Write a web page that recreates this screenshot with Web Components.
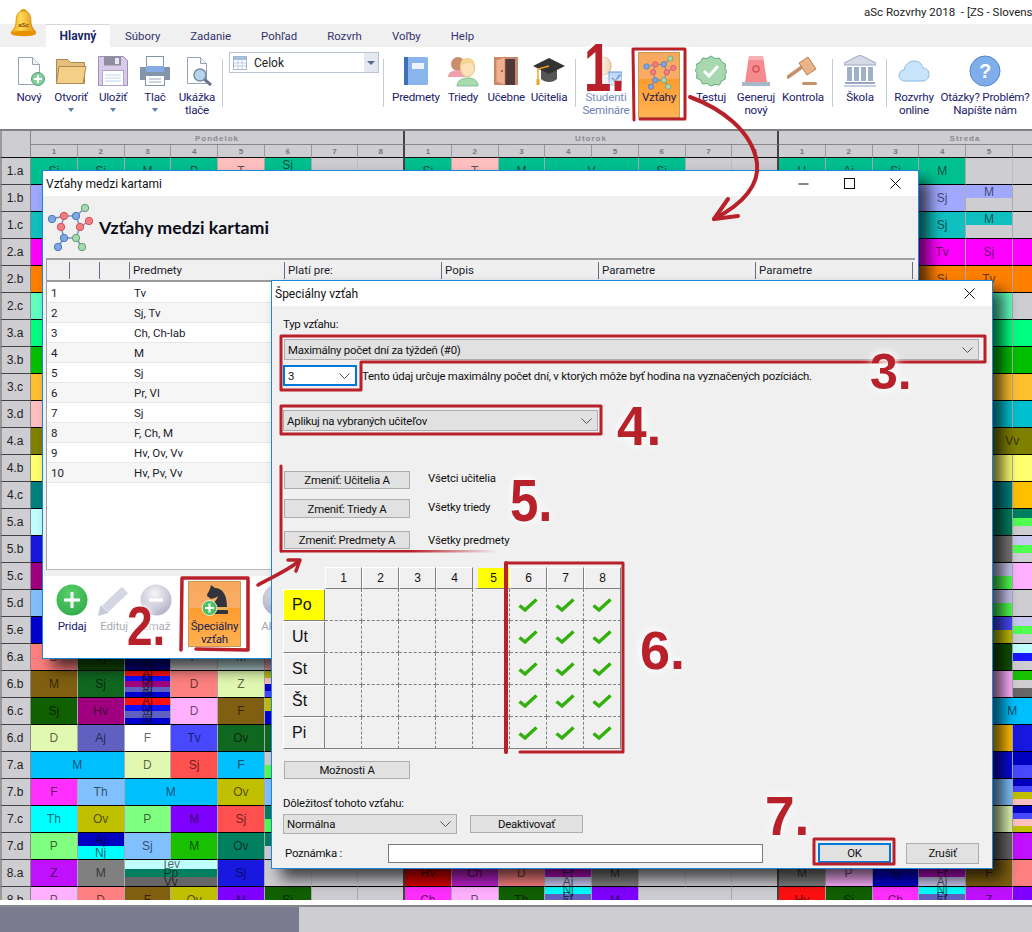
<!DOCTYPE html>
<html lang="sk">
<head>
<meta charset="utf-8">
<title>aSc Rozvrhy</title>
<style>
  html, body { margin: 0; padding: 0; }
  body { width: 1032px; height: 932px; overflow: hidden; position: relative; background: #fff; font: 12px Roboto, sans-serif; color: #000; }
  asc-ribbon svg, asc-window svg { display: block; }
</style>
</head>
<body>

<asc-titlebar>aSc Rozvrhy 2018&nbsp; - [ZS - Slovensko]</asc-titlebar>
<asc-tabs>
  <asc-tab active>Hlavný</asc-tab><asc-tab>Súbory</asc-tab><asc-tab>Zadanie</asc-tab><asc-tab>Pohľad</asc-tab><asc-tab>Rozvrh</asc-tab><asc-tab>Voľby</asc-tab><asc-tab>Help</asc-tab>
</asc-tabs>

<asc-ribbon>
  <rb-item w="42" drop="no"><svg slot="icon" width="32" height="32" viewBox="0 0 32 32"><path d="M5.5 2.5h14l7 7v20h-21z" fill="#fff" stroke="#95a3b8"/><path d="M19.5 2.5v7h7" fill="#eef1f6" stroke="#95a3b8"/><circle cx="25" cy="24" r="6.5" fill="#86cfa0" stroke="#4f9f70"/><path d="M25 20v8M21 24h8" stroke="#fff" stroke-width="2"/></svg>Nový</rb-item>
  <rb-item w="42" drop="yes"><svg slot="icon" width="32" height="32" viewBox="0 0 32 32"><path d="M1.5 4.5h11l3 3h14v21h-28z" fill="#e8bf78" stroke="#ab8b55"/><path d="M4 11.5h27l-3 17H1.5z" fill="#f5cf85" stroke="#ab8b55"/></svg>Otvoriť</rb-item>
  <rb-item w="42" drop="yes"><svg slot="icon" width="32" height="32" viewBox="0 0 32 32"><path d="M1.5 1.5h25l4 4v25h-29z" fill="#d9cbe8" stroke="#9f8fbc"/><rect x="7" y="1.5" width="17" height="9" fill="#8f8d9f"/><rect x="18" y="3" width="4" height="6" fill="#e8e8f0"/><rect x="5.5" y="15.5" width="21" height="15" fill="#fff" stroke="#b0a4c6"/><path d="M8 20h16M8 23h16M8 26h16" stroke="#bcd4ee"/></svg>Uložiť</rb-item>
  <rb-item w="42" drop="yes"><svg slot="icon" width="32" height="32" viewBox="0 0 32 32"><rect x="7.5" y="1.5" width="17" height="10" fill="#fff" stroke="#8494ab"/><path d="M1 12h30v13H1z" fill="#8494ab"/><rect x="7" y="11" width="18" height="6" fill="#85aae6"/><rect x="6.5" y="20.5" width="19" height="10" fill="#fff" stroke="#8494ab"/><path d="M10 24h12M10 27h12" stroke="#9aa8bc"/></svg>Tlač</rb-item>
  <rb-item w="42" drop="no"><svg slot="icon" width="32" height="32" viewBox="0 0 32 32"><path d="M6.5 2.5h13l6 6v20h-19z" fill="#fff" stroke="#95a3b8"/><path d="M19.5 2.5v6h6" fill="#eef1f6" stroke="#95a3b8"/><path d="M23 24l7 6" stroke="#6a7688" stroke-width="3"/><circle cx="19" cy="20" r="6" fill="#b5d4ee" stroke="#7a8aa0" stroke-width="1.5"/></svg>Ukážka<br>tlače</rb-item>
  <rb-sep style="margin-left:4px"></rb-sep>
  <rb-combo style="margin-left:6px">Celok</rb-combo>
  <rb-sep style="margin-left:4px"></rb-sep>
  <rb-item w="47" style="margin-left:8.5px"><svg slot="icon" width="32" height="32" viewBox="0 0 32 32"><rect x="4" y="2" width="24" height="28" rx="1.5" fill="#8ab4ec"/><rect x="4" y="2" width="4" height="28" fill="#3f6fb5"/><rect x="12" y="8" width="12" height="6" fill="#eef3fb"/></svg>Predmety</rb-item>
  <rb-item w="47"><svg slot="icon" width="32" height="32" viewBox="0 0 32 32"><circle cx="11" cy="9" r="7" fill="#c98f6c"/><path d="M1 22c0-5 5-7 10-7s10 2 10 7z" fill="#f0a0a8"/><path d="M10 31c0-6 6-8 11-8s10 2 10 8z" fill="#a8dcb0" stroke="#6fae80" stroke-width=".7"/><ellipse cx="20.5" cy="13" rx="7" ry="9" fill="#fbe0b8" stroke="#e3c48e"/><path d="M13 13c0-8 3-10 7.500-10S28 5 28 13c-2-3-3-5-7-5-3 0-6 2-8 5z" fill="#f3d492"/></svg>Triedy</rb-item>
  <rb-item w="39.500"><svg slot="icon" width="32" height="32" viewBox="0 0 32 32"><path d="M4 2h24v28H4z" fill="#c88a6a"/><rect x="13" y="4" width="12" height="26" fill="#503838"/><path d="M6 5l9-3v28l-9-3z" fill="#f0b090" stroke="#c47f60" stroke-width=".7"/><circle cx="12" cy="16" r=".9" fill="#7a4030"/></svg>Učebne</rb-item>
  <rb-item w="46"><svg slot="icon" width="32" height="32" viewBox="0 0 32 32"><path d="M8 15v9c4 4 12 4 16 0v-9z" fill="#555"/><path d="M0 11l16-8 16 8-16 8z" fill="#333"/><path d="M16 11l-11 3v11" fill="none" stroke="#f0a020" stroke-width="1.400"/><rect x="3.500" y="24" width="3" height="6" fill="#f0a020"/></svg>Učitelia</rb-item>
  <rb-sep style="margin-left:3px"></rb-sep>
  <rb-item w="56" style="margin-left:2px" dim><svg slot="icon" width="32" height="32" viewBox="0 0 32 32"><ellipse cx="14" cy="11" rx="7" ry="9" fill="#f2d6b4" stroke="#cfae88"/><path d="M2 31c0-7 6-10 12-10s12 3 12 10z" fill="#e8e8ee"/><rect x="19" y="17" width="13" height="13" fill="#bcd6f6" stroke="#6090d0"/><path d="M22 23l3 3 5-6" fill="none" stroke="#4a7ac0" stroke-width="1.600"/></svg>Študenti<br>Semináre</rb-item>
  <rb-item w="42" style="margin-left:4px" active><span slot="icon"><graph-icon scale=".72"></graph-icon></span>Vzťahy</rb-item>
  <rb-item w="42" style="margin-left:10px"><svg slot="icon" width="32" height="32" viewBox="0 0 32 32"><path d="M16 1l4 2.500 4.500-.5 2 4 4 2-.5 4.500 2 3-2 3 .5 4.500-4 2-2 4-4.500-.5L16 31l-4-2.500-4.500.5-2-4-4-2 .5-4.500-2-3 2-3L1.500 9l4-2 2-4 4.500.5z" fill="#a8d8b0" stroke="#66ab7e"/><path d="M9 16l5 5 9-10" fill="none" stroke="#fff" stroke-width="3"/></svg>Testuj</rb-item>
  <rb-item w="48"><svg slot="icon" width="32" height="32" viewBox="0 0 32 32"><path d="M9 1h14l4 26H5z" fill="#f58a8f"/><path d="M9 1h14l.8 4H8.300z" fill="#f9b0b4"/><circle cx="16" cy="14" r="3" fill="none" stroke="#d85058" stroke-width="1.500"/><rect x="2" y="27" width="28" height="4" fill="#a8b8c8"/></svg>Generuj<br>nový</rb-item>
  <rb-item w="46"><svg slot="icon" width="32" height="32" viewBox="0 0 32 32"><path d="M1 22L15 12" stroke="#c89068" stroke-width="3.500" stroke-linecap="round"/><path d="M12 8l9-6 8 12-9 6z" fill="#e8b488" stroke="#b88058"/><rect x="15" y="27" width="15" height="3" rx="1.500" fill="#c89068"/></svg>Kontrola</rb-item>
  <rb-sep style="margin-left:6px"></rb-sep>
  <rb-item w="44" style="margin-left:5px"><svg slot="icon" width="32" height="32" viewBox="0 0 32 32"><path d="M16 0L0 8v2h32V8z" fill="#d4dae6" stroke="#98a8c0"/><path d="M3 12h5v14H3zM10 12h5v14h-5zM17 12h5v14h-5zM24 12h5v14h-5z" fill="#a0b0c8"/><path d="M1 27h30v2H1z" fill="#98a8c0"/><path d="M0 30h32v2H0z" fill="#c4cede"/></svg>Škola</rb-item>
  <rb-sep style="margin-left:4px"></rb-sep>
  <rb-item w="48" style="margin-left:3px"><svg slot="icon" width="32" height="32" viewBox="0 0 32 32"><path d="M7 26c-4 0-6-3-6-5.500C1 17 4 15 6 15c1-5 5-9 10-9s8 3 9 7c4 0 6 3 6 6.500S28 26 25 26z" fill="#c8e4fb" stroke="#88b8e0"/></svg>Rozvrhy<br>online</rb-item>
  <rb-item w="94"><svg slot="icon" width="32" height="32" viewBox="0 0 32 32"><circle cx="16" cy="16" r="15" fill="#80aeea" stroke="#5088d0"/><text x="16" y="23" text-anchor="middle" font-family="Liberation Sans" font-weight="700" font-size="20" fill="#fff">?</text></svg>Otázky? Problém?<br>Napíšte nám</rb-item>
</asc-ribbon>

<asc-timetable></asc-timetable>
<asc-scrollbar></asc-scrollbar>

<asc-logo></asc-logo>

<asc-window title="Vzťahy medzi kartami" controls="3" style="left:42px;top:170px;width:877px;height:489px">
  <relations-panel></relations-panel>
</asc-window>

<asc-window title="Špeciálny vzťah" controls="1" style="left:271px;top:280px;width:722px;height:589px">
  <special-form></special-form>
</asc-window>

<red-marks></red-marks>

<script>
// small base: builds the shadow root once the element is in the page
class ShadowEl extends HTMLElement {
    connectedCallback() {
        if (this.shadowRoot) return;
        this.attachShadow({ mode: 'open' }).innerHTML = `<style>${this.css()}</style>${this.html()}`;
    }
    css() { return ':host{display:block}'; }
    html() { return '<slot></slot>'; }
}

const UI_FONT = 'Roboto, "Noto Sans", sans-serif';
const HEAD_FONT = 'Lato, Roboto, sans-serif';
const CELL_FONT = '"Liberation Sans", Arial, sans-serif';
const GRAY = '#cdcdd2';

class AscTitlebar extends ShadowEl {
    css() {
        return `:host{display:block;height:24px;background:#fff;font:11.500px/25px ${UI_FONT};color:#222;
                padding-left:864px;white-space:nowrap;overflow:hidden;box-sizing:border-box}`;
    }
}

class AscLogo extends ShadowEl {
    css() { return ':host{display:block;position:absolute;left:10px;top:8px;width:27px;height:29px}'; }
    html() {
        return `<svg width="27" height="29" viewBox="0 0 27 29"><defs><linearGradient id="b" x1="0" x2="1"><stop offset="0" stop-color="#f2a800"/><stop offset=".4" stop-color="#ffd95a"/><stop offset="1" stop-color="#e08a00"/></linearGradient></defs>
        <path d="M10 4c0-4 7-4 7 0z" fill="#e8a400"/><path d="M13.500 3C8 3 6 7 6 13c0 6-3 9-5 11 0 3 25 3 25 0-2-2-5-5-5-11 0-6-2-10-7.500-10z" fill="url(#b)" stroke="#c07800" stroke-width=".6"/>
        <ellipse cx="13.500" cy="25.500" rx="12.500" ry="2.800" fill="#e89000"/>
        <text x="13.500" y="19" text-anchor="middle" font-family="Liberation Sans" font-size="6" font-weight="700" fill="#8a4a00">aSc</text></svg>`;
    }
}

class AscTabs extends ShadowEl {
    css() { return ':host{display:flex;height:23px;background:#f0f0f0;padding-left:46px;box-sizing:border-box}'; }
}

class AscTab extends ShadowEl {
    css() {
        return `:host{display:block;padding:0 15px;font:11.400px/24px ${UI_FONT};color:#33336e;height:23px;box-sizing:border-box}
                :host([active]){background:#fff;font:700 12px/22px ${UI_FONT};color:#1c2a6a;border-top:1px solid #d8d8d8;width:64px;padding:0;text-align:center}`;
    }
}

class AscRibbon extends ShadowEl {
    css() { return ':host{display:flex;align-items:flex-start;height:82px;background:#fff;padding-left:8px;box-sizing:border-box}'; }
}

class RbSep extends ShadowEl {
    css() { return ':host{display:block;flex:none;width:1px;height:48px;margin-top:12px;background:#c8ccd0}'; }
}

class RbCombo extends ShadowEl {
    css() {
        return `:host{display:flex;flex:none;align-items:center;width:150px;height:21px;margin-top:5px;box-sizing:border-box;
                border:1px solid #b8c4d4;font:12px ${UI_FONT};color:#222;background:#fff}
                .cal{margin:0 7px 0 3px} .t{flex:1}
                .btn{width:14px;height:19px;background:#e4e8f0;position:relative}
                .btn:after{content:"";position:absolute;left:3px;top:8px;border:4px solid transparent;border-top-color:#5a6a88}`;
    }
    html() {
        return `<svg class="cal" width="14" height="14" viewBox="0 0 14 14"><rect x=".5" y=".5" width="13" height="13" fill="#fff" stroke="#a8b8cc"/><rect x="1" y="1" width="12" height="3" fill="#9cc0e4"/><path d="M5 1v12M9 1v12M1 7h12M1 10h12" stroke="#c0cede"/></svg><span class="t"><slot></slot></span><span class="btn"></span>`;
    }
}

// ribbon and window toolbar button: icon on top, label below
class RbItem extends ShadowEl {
    css() {
        const w = this.getAttribute('w') || 42;
        return `:host{display:flex;flex:none;flex-direction:column;align-items:center;box-sizing:border-box;width:${w}px;padding-top:8px;
                font:11.600px/13px ${UI_FONT};letter-spacing:-.2px;color:#20206a;text-align:center;white-space:nowrap}
                :host([dim]){color:#6f7fb5}
                :host([off]){color:#a9a9b4}
                :host([active]){margin-top:5px;padding-top:3px;height:66px;color:#1c1c50;
                  background:linear-gradient(#f7a85c 0,#f9ad66 40%,#ff9b2e 41%,#ffb355 100%);
                  box-shadow:inset 0 0 0 1px #c79a58}
                .i{display:block;width:32px;height:32px;margin-bottom:4px}
                .d{width:0;height:0;margin:4px auto 0;border:3.500px solid transparent;border-top:4px solid #5a7ab0;border-bottom:0}`;
    }
    html() {
        const drop = this.getAttribute('drop') === 'yes' ? '<div class="d"></div>' : '';
        return `<span class="i"><slot name="icon"></slot></span><div><slot></slot></div>${drop}`;
    }
}

// the molecule logo, used in the ribbon and in the window heading
class GraphIcon extends ShadowEl {
    css() {
        const s = Number(this.getAttribute('scale') || 1);
        return `:host{display:block;width:${48 * s}px;height:${48 * s}px}`;
    }
    html() {
        const s = Number(this.getAttribute('scale') || 1);
        const n = [[5, 16, 'b'], [17, 13, 'r'], [29, 13, 'b'], [38, 5, 'g'], [42, 18, 'r'], [14, 24, 'r'], [33, 24, 'r'], [17, 35, 'b'], [29, 35, 'g'], [11, 44, 'b'], [35, 44, 'g']];
        const e = [[0, 1], [1, 2], [2, 3], [2, 6], [1, 5], [5, 7], [6, 4], [6, 8], [7, 8], [7, 9], [8, 10]];
        const col = { b: ['#7ea7e0', '#4a78c0'], r: ['#ef7f80', '#d85058'], g: ['#a8d8b0', '#60a070'] };
        const lines = e.map(([a, b]) => `<line x1="${n[a][0]}" y1="${n[a][1]}" x2="${n[b][0]}" y2="${n[b][1]}" stroke="#6f8fc0" stroke-width="1.400"/>`).join('');
        const dots = n.map(([x, y, c]) => `<circle cx="${x}" cy="${y}" r="3.700" fill="${col[c][0]}" stroke="${col[c][1]}"/>`).join('');
        return `<svg width="${48 * s}" height="${48 * s}" viewBox="0 0 48 48" style="display:block">${lines}${dots}</svg>`;
    }
}

class AscTimetable extends ShadowEl {
    css() {
        return `:host{display:block;height:771px;overflow:hidden;border-top:2px solid #808080;box-sizing:border-box;background:${GRAY};isolation:isolate}
        .g{display:grid;grid-template-columns:31px repeat(24,46.75px);grid-template-rows:14px 13px repeat(28,27px);width:1153px;font:12px ${CELL_FONT}}
        .g>div{box-sizing:border-box;min-width:0;overflow:hidden}
        .corner{grid-row:1/3;grid-column:1;background:${GRAY};border-left:2px solid #999;border-right:1px solid #888;border-bottom:1px solid #111}
        .day{background:${GRAY};border-bottom:1px solid #888;border-right:2px solid #444;text-align:center;font:700 8px/15px ${CELL_FONT};color:#8a8a90;letter-spacing:1px}
        .per{background:${GRAY};border-bottom:1px solid #111;border-right:1px solid #999;text-align:center;font:700 8px/13px ${CELL_FONT};color:#777}
        .rh{background:${GRAY};border-left:2px solid #999;border-right:1px solid #888;border-bottom:1px solid #444;font:12px/27px ${CELL_FONT};color:#222;text-align:center;padding-right:2px}
        .c{border-bottom:1px solid #000;border-right:1px solid #a9a9ae;display:flex;flex-direction:column;color:rgba(0,0,0,.62)}
        .c.e{border-right-color:#bdbdc2}
        .c.ds,.per.ds{border-right:2px solid #444}
        .s{flex:1;min-height:0;display:flex;align-items:center;justify-content:center;line-height:10px}
        .s span{position:relative;z-index:1}`;
    }
    html() {
        const days = ['Pondelok', 'Utorok', 'Streda'];
        let out = '<div class="corner"></div>';
        days.forEach((d, i) => {
            out += `<div class="day" style="grid-row:1;grid-column:${2 + i * 8}/span 8">${d}</div>`;
            for (let p = 0; p < 8; p++) {
                const ds = p === 7 ? ' ds' : '';
                out += `<div class="per${ds}" style="grid-row:2;grid-column:${2 + i * 8 + p}">${p + 1}</div>`;
            }
        });
        AscTimetable.rows.forEach(([name, spec], r) => {
            const row = r + 3;
            out += `<div class="rh" style="grid-row:${row};grid-column:1">${name}</div>`;
            const taken = new Set();
            spec.split(';').map(s => s.trim()).filter(Boolean).forEach(item => {
                const [col, text, color, span] = item.split(' ');
                const c = Number(col), sp = Number(span || 1);
                for (let k = 0; k < sp; k++) taken.add(c + k);
                const ds = (c + sp) % 8 === 0 ? ' ds' : '';
                const colors = color.split(',');
                const texts = text.split(',');
                const stripes = colors.map((cl, k) => {
                    const t = texts[k] && texts[k] !== '-' ? `<span>${texts[k]}</span>` : '';
                    return `<div class="s" style="background:${cl === 'x' ? GRAY : cl}">${t}</div>`;
                }).join('');
                out += `<div class="c${ds}" style="grid-row:${row};grid-column:${c + 2}/span ${sp}">${stripes}</div>`;
            });
            for (let c = 0; c < 24; c++) {
                if (taken.has(c)) continue;
                const ds = (c + 1) % 8 === 0 ? ' ds' : '';
                out += `<div class="c e${ds}" style="grid-row:${row};grid-column:${c + 2}"></div>`;
            }
        });
        return `<div class="g">${out}</div>`;
    }
}
// col text color span; commas inside text/color make stacked stripes, x = empty stripe
AscTimetable.rows = [
    ['1.a', '0 Sj #00c090;1 Sj #00c090;2 M #00c090;3 P #00c090;4 T #ffc0c0;5 Sj,- #00c090,#00c090;8 Sj #00c090;9 T #ffc0c0;10 M #00c090;11 V #00c090 2;13 Sj #00c090;16 H #00c090;17 Aj #00c090;18 Sj #00c090;19 M #00c090'],
    ['1.b', '0 - #a0a8ff;19 Sj #a0a8ff;20 M,- #a0a8ff,x'],
    ['1.c', '0 - #10c0c0;19 Sj #10c0c0;20 M,- #10c0c0,x'],
    ['2.a', '0 - #ff00ff;19 Tv #ff00ff;20 Sj #ff00ff;21 - #ff00ff'],
    ['2.b', '0 - #ff8000;19 Sj #ff8000;20 Tv #ff8000;21 F #ff8000'],
    ['2.c', '0 - #60ffc0;20 - #60ffc0'],
    ['3.a', '0 - #00ff80;20 - #00ff80;21 - #00ff80'],
    ['3.b', '0 - #00c000;20 - #00c000;21 - #00c000'],
    ['3.c', '0 - #ffc030;20 - #ffc030;21 - #ffc030'],
    ['3.d', '0 - #ffc0c0;20 - #00c0d0;21 - #00c0d0'],
    ['4.a', '0 - #808000;20 Vv #808000 2'],
    ['4.b', '0 - #ffff70;20 - #ffff70;21 - #ffff70'],
    ['4.c', '0 - #008080;20 - #008080;21 - #ffc000'],
    ['5.a', '0 - #c0ffff;20 - #008060;21 -,-,- #008060,#50ff50,x'],
    ['5.b', '0 - #1818e0;20 - #777777;21 -,-,- #c8c8f0,#50ff50,x'],
    ['5.c', '0 - #a00080;20 -,- #c8c8f0,#50ff50;21 - #ffb0ff'],
    ['5.d', '0 - #80c0ff;20 -,- #c8c8f0,#50ff50'],
    ['5.e', '0 - #0000d0;20 -,- #4848ff,#c0c000;21 -,-,- #c8c8f0,#50ff50,x'],
    ['6.a', '0 D #ff8080;1 Sj #105000;2 Aj,Aj #2030a0,#000080;3 F #cdcdd2;4 M #c0e0e0;5 - #ffa0a0;20 - #105000;21 -,-,- #c0ffff,#1818ff,x'],
    ['6.b', '0 M #805f10;1 Sj #106820;2 Aj,Nj,Ri,Aj,Aj #ff1010,#1010ff,#a00080,#6060c0,#0000d0;3 D #ff8080;4 Z #e0f8b0;5 -,-,-,- #c0c000,#ffc0c0,#0000d0,#4848ff;20 - #ffb0ff;21 -,-,- #18c000,x,#666666'],
    ['6.c', '0 Sj #105f00;1 Hv #a00080;2 Aj,Nj,Aj,Aj #ff1010,#1010ff,#6060c0,#0000d0;3 D #ffb0ff;4 F #805f10;5 -,- #c0c000,#0000d0;20 M #00c0ff 2'],
    ['6.d', '0 D #e0f8b0;1 Aj #6060c0;2 F #ffffff;3 Tv #4848ff;4 Ov #106820;5 - #106820;20 - #ffc000;21 - #1818e0'],
    ['7.a', '0 M #00c0ff 2;2 D #e0f8b0;3 Sj #ff5050;4 F #00c0ff;5 -,- x,#50ff50;20 - #0808e0;21 -,- #0000c0,#4848ff'],
    ['7.b', '0 F #ff30ff;1 Th #80c0ff;2 M #00c0ff 2;4 Ov #c0c000;5 - #80c0ff;20 - #80c0ff;21 -,-,-,- #0000c0,#4848ff,#c0c000,#ffc0c0'],
    ['7.c', '0 Th #00ffff;1 Ov #c0c000;2 P #80ff80;3 M #8000ff;4 Sj #ff5050;5 -,- #008060,#50ff50;20 - #e0f8b0;21 -,-,-,- #0000c0,#4848ff,#ffc0c0,#c0c000'],
    ['7.d', '0 P #80ff80;1 Aj,Nj #0000c0,#00ffff;2 Sj #80c0ff;3 M #18c000;4 Ov #008060;5 -,- #008060,x;20 - #666666;21 - #c010ff'],
    ['8.a', '0 Z #c010ff;1 M #808080;2 Tev,Pp,Vv #c0ffff,#008060,#666666 2;4 Sj #1818e0;8 Hv #e00000;9 Ch #c020d0;10 D #ff8080;11 Nj,Fr,Aj #00c0c0,#c010d0,#c8c8f0;12 M #808080;16 M #808080;17 P #ffb0ff;18 Sj #0000d0;19 Nj,Fr,Aj #00c0c0,#c010d0,#c8c8f0;20 F #805f10;21 - #ff8080'],
    ['8.b', '0 P #ffb0ff;1 D #ff8080;2 F #805f10;3 Ov #c0c000;4 M #8000ff;5 Sj #105f00;6 -,Nv x,#50ff50;8 Ch #ff30ff;9 P #ffb0ff;10 Th #105f00;11 Nj,Fr,Aj,Nj #00ffff,#6060c0,#c8c8f0,#a00080;12 M #8000ff;13 -,Pp x,#008060 2;16 Hv #ff1010;17 Sj #105f00;18 Ch #ff30ff;19 Nj,Fr,Aj,Nj #00ffff,#6060c0,#c8c8f0,#a00080;20 Z #c010ff;21 - #8000ff']
];

class AscScrollbar extends ShadowEl {
    css() {
        return `:host{display:block;height:32px;background:#fff;padding-top:5px;box-sizing:border-box}
                .t{height:27px;border-top:2px solid #888;background:${GRAY};box-sizing:border-box}
                .k{width:299px;height:25px;background:#7b7b90}`;
    }
    html() { return '<div class="t"><div class="k"></div></div>'; }
}

// a desktop window: title bar with controls, content in the slot
class AscWindow extends ShadowEl {
    css() {
        return `:host{display:flex;flex-direction:column;position:absolute;box-sizing:border-box;border:1px solid #1c86d8;background:#f0f0f0;
                box-shadow:10px 10px 14px rgba(0,0,0,.68);font:11.500px ${UI_FONT};color:#111}
                header{display:flex;align-items:center;height:25px;flex:none;background:#fff;padding-left:3px;font:12px ${UI_FONT}}
                .t{flex:1}
                .ctl{width:46px;display:flex;justify-content:center}
                .body{flex:1;min-height:0;overflow:hidden;display:flex;flex-direction:column}`;
    }
    html() {
        const min = '<svg width="11" height="11" viewBox="0 0 11 11"><path d="M.5 6h10" stroke="#111"/></svg>';
        const max = '<svg width="11" height="11" viewBox="0 0 11 11"><rect x=".5" y=".5" width="10" height="10" fill="none" stroke="#111"/></svg>';
        const cls = '<svg width="11" height="11" viewBox="0 0 11 11"><path d="M.5.5l10 10M10.500.5l-10 10" stroke="#111"/></svg>';
        const n = this.getAttribute('controls');
        const ctl = (n === '3' ? [min, max, cls] : [cls]).map(s => `<span class="ctl">${s}</span>`).join('');
        return `<header><span class="t">${this.getAttribute('title')}</span>${ctl}</header><div class="body"><slot></slot></div>`;
    }
}

class RelationsPanel extends ShadowEl {
    css() {
        return `:host{display:flex;flex-direction:column;flex:1;min-height:0}
        .head{display:flex;align-items:center;height:62px;padding-left:4px;flex:none}
        h1{margin:0 0 0 4px;font:700 17.800px ${HEAD_FONT};color:#0c0c18}
        .tbl{margin-left:3px;width:868px;border-left:1px solid #a0a0a0;flex:none}
        .r{display:grid;grid-template-columns:23px 30px 30px 155px 157px 157px 157px 157px}
        .hd{height:24px;border-top:2px solid #a0a0a0;border-bottom:2px solid #9a9a9a;box-sizing:border-box;align-items:center}
        .hd span{height:17px;line-height:17px;border-right:1px solid #6a6a88;padding-left:3px;white-space:nowrap;color:#1c1c2c}
        .rows{background:#fff;height:288px;border-bottom:1px solid #bbb;box-sizing:border-box;padding-top:1px}
        .dr{height:20px;line-height:20px;box-sizing:border-box;border-bottom:1px solid #e8e8e8;color:#1c1c2c}
        .dr:nth-child(even){background:#f6f6f6}
        .dr span:first-child{padding-left:4px}
        .dr span:nth-child(4){padding-left:4px}
        .bar{margin-top:6px;background:#fff;flex:1;display:flex;align-items:flex-start;padding-left:8px}`;
    }
    html() {
        const data = ['Tv', 'Sj, Tv', 'Ch, Ch-lab', 'M', 'Sj', 'Pr, Vl', 'Sj', 'F, Ch, M', 'Hv, Ov, Vv', 'Hv, Pv, Vv'];
        const rows = data.map((d, i) => `<div class="r dr"><span>${i + 1}</span><span></span><span></span><span>${d}</span></div>`).join('');
        const heads = ['', '', '', 'Predmety', 'Platí pre:', 'Popis', 'Parametre', 'Parametre'].map(h => `<span>${h}</span>`).join('');
        const ball = (id, a, b, mark) => `<svg slot="icon" width="32" height="32" viewBox="0 0 32 32"><defs><radialGradient id="${id}" cx=".45" cy=".3" r=".8"><stop offset="0" stop-color="${a}"/><stop offset="1" stop-color="${b}"/></radialGradient></defs><circle cx="16" cy="16" r="15.500" fill="url(#${id})"/>${mark}</svg>`;
        return `<div class="head"><graph-icon></graph-icon><h1>Vzťahy medzi kartami</h1></div>
        <div class="tbl"><div class="r hd">${heads}</div><div class="rows">${rows}</div></div>
        <div class="bar">
          <rb-item w="42">${ball('gp', '#58d068', '#2fa84a', '<path d="M16 8v16M8 16h16" stroke="#fff" stroke-width="3"/>')}Pridaj</rb-item>
          <rb-item w="42" off><svg slot="icon" width="32" height="32" viewBox="0 0 32 32"><path d="M7 25L27 6" stroke="#d4d6e4" stroke-width="9"/><path d="M0 32l2.500-11 8 8z" fill="#c8cad8"/></svg>Edituj</rb-item>
          <rb-item w="42" off>${ball('gm', '#f6f6f8', '#a8a8c0', '<path d="M9 16h14" stroke="#fff" stroke-width="3"/>')}Zmaž</rb-item>
          <rb-item w="53" style="margin-left:11px" active><svg slot="icon" width="32" height="32" viewBox="0 0 32 32"><path d="M12 1l4 3c7 0 12 6 12 19H13c0-4 5-6 6-11-2 2-5 2-7 3l-4-3c0-3 3-5 4-11z" fill="#33333c"/><rect x="10" y="23" width="19" height="3" fill="#e6b35a"/><rect x="9" y="26" width="20" height="4" rx="1" fill="#33333c"/><circle cx="10.500" cy="24" r="7.500" fill="#50c060" stroke="#fff" stroke-width=".8"/><path d="M10.500 19.500v9M6 24h9" stroke="#fff" stroke-width="2.200"/></svg>Špeciálny<br>vzťah</rb-item>
          <rb-item w="48" style="margin-left:13px" off>${ball('ga', '#e8e8f0', '#a8a8c0', '')}Aktivuj</rb-item>
        </div>`;
    }
}

class WinCombo extends ShadowEl {
    css() {
        return `:host{display:flex;align-items:center;box-sizing:border-box;background:#e1e1e1;border:1px solid #adadad;padding-left:3px;font:11.400px ${UI_FONT};letter-spacing:-.22px;color:#111}
                :host([focus]){background:#fff;border:2px solid #0078d7;padding-left:3px}
                .t{flex:1;white-space:nowrap}
                svg{margin-right:5px;flex:none}`;
    }
    html() { return '<span class="t"><slot></slot></span><svg width="11" height="6" viewBox="0 0 11 6"><path d="M.5.5l5 5 5-5" fill="none" stroke="#555"/></svg>'; }
}

class WinButton extends ShadowEl {
    css() {
        return `:host{display:flex;align-items:center;justify-content:center;box-sizing:border-box;background:#e1e1e1;border:1px solid #adadad;font:11.400px ${UI_FONT};letter-spacing:-.22px;color:#111;white-space:nowrap}
                :host([focus]){border:2px solid #0078d7}`;
    }
}

class DayGrid extends ShadowEl {
    css() {
        return `:host{display:grid;grid-template-columns:42px repeat(8,37px);grid-template-rows:22px repeat(5,32px);width:338px;font:12px ${CELL_FONT};letter-spacing:0;color:#111}
        div{box-sizing:border-box}
        .h{border-right:1px solid #808080;border-bottom:1px solid #808080;border-top:1px solid #fff;border-left:1px solid #fff;display:flex;align-items:center;justify-content:center}
        .h.cr{border:0}
        .h.y{background:#ff0;border:solid #f0f0f0;border-width:1px 5px 0 5px;border-bottom:1px solid #808080;border-right-width:1px}
        .d{font-size:16px;border-right:1px solid #808080;border-bottom:1px solid #808080;border-top:1px solid #fff;border-left:1px solid #fff;display:flex;align-items:center;padding-left:8px}
        .d.y{background:#ff0}
        .c{border-right:1px dashed #808080;border-bottom:1px dashed #808080;display:flex;align-items:center;justify-content:center}
        .c.re{border-right:1px solid #808080}.c.be{border-bottom:1px solid #808080}`;
    }
    html() {
        const check = '<svg width="20" height="14" viewBox="0 0 20 14" style="display:block"><path d="M1.500 7.500l5.500 4.500L18.500 1.500" fill="none" stroke="#33b00c" stroke-width="3.400"/></svg>';
        let out = '<div class="h cr"></div>';
        for (let p = 1; p <= 8; p++) out += `<div class="h${p === 5 ? ' y' : ''}">${p}</div>`;
        ['Po', 'Ut', 'St', 'Št', 'Pi'].forEach((d, r) => {
            out += `<div class="d${r === 0 ? ' y' : ''}">${d}</div>`;
            for (let p = 1; p <= 8; p++) {
                const cl = (p === 8 ? ' re' : '') + (r === 4 ? ' be' : '');
                out += `<div class="c${cl}">${p >= 6 ? check : ''}</div>`;
            }
        });
        return out;
    }
}

class SpecialForm extends ShadowEl {
    css() {
        return `:host{display:block;padding:11px 0 0 11px;font:11.400px ${UI_FONT};letter-spacing:-.22px;color:#111}
        p{margin:0;line-height:14px;white-space:nowrap}
        .row{display:flex;align-items:center}
        .line{display:flex;align-items:center;height:18px}
        .line span{margin-left:18px;position:relative;top:-2px}`;
    }
    html() {
        return `<p>Typ vzťahu:</p>
        <win-combo style="margin:8px 0 0 1px;width:695px;height:21px">Maximálny počet dní za týždeň (#0)</win-combo>
        <div class="row" style="margin-top:5px;height:21px"><win-combo focus style="width:74px;height:21px">3</win-combo><span style="margin-left:5px">Tento údaj určuje maximálny počet dní, v ktorých môže byť hodina na vyznačených pozíciách.</span></div>
        <win-combo style="margin-top:24px;width:315px;height:21px">Aplikuj na vybraných učiteľov</win-combo>
        <div class="line" style="margin:40px 0 0 1px"><win-button style="width:126px;height:18px">Zmeniť: Učitelia A</win-button><span>Všetci učitelia</span></div>
        <div class="line" style="margin:10px 0 0 1px;height:19px"><win-button style="width:126px;height:19px">Zmeniť: Triedy A</win-button><span>Všetky triedy</span></div>
        <div class="line" style="margin:13px 0 0 1px"><win-button style="width:126px;height:18px">Zmeniť: Predmety A</win-button><span style="top:0">Všetky predmety</span></div>
        <day-grid style="margin-top:18px"></day-grid>
        <win-button style="margin:12px 0 0 1px;width:126px;height:18px">Možnosti A</win-button>
        <p style="margin-top:17px">Dôležitosť tohoto vzťahu:</p>
        <div class="row" style="margin-top:4px;height:20px"><win-combo style="width:174px;height:20px">Normálna</win-combo><win-button style="margin-left:13px;width:113px;height:18px">Deaktivovať</win-button></div>
        <div class="row" style="margin-top:8px;height:22px">
          <span style="width:105px;padding-left:2px;box-sizing:border-box">Poznámka :</span>
          <span style="width:375px;height:19px;box-sizing:border-box;border:1px solid #7a7a7a;background:#fff"></span>
          <win-button focus style="margin-left:55px;width:73px;height:20px">OK</win-button>
          <win-button style="margin-left:15px;width:73px;height:21px">Zrušiť</win-button>
        </div>`;
    }
}

// hand-drawn red notes of the tutorial, on top of everything
class RedMarks extends ShadowEl {
    css() {
        return `:host{display:block;position:absolute;left:0;top:0;width:1032px;height:932px;pointer-events:none;overflow:hidden}
        svg{position:absolute;left:0;top:0}
        span{position:absolute;font:700 60px/1 "Liberation Sans",Arial,sans-serif;color:#b8202a;transform-origin:0 0;
             text-shadow:0 0 8px #fff,0 0 14px #fff;white-space:nowrap}`;
    }
    html() {
        const digits = [
            ['1.', 584, 33, 68, .72], ['2.', 127, 598, 56, .82], ['3.', 870, 347, 50, 1],
            ['4.', 617, 398, 56, .95], ['5.', 510, 471, 60, .85], ['6.', 640, 623, 54, 1], ['7.', 765, 788, 56, .95]
        ].map(([t, x, y, f, sx]) => `<span style="left:${x}px;top:${y}px;font-size:${f}px;transform:scaleX(${sx})">${t}</span>`).join('');
        return `<svg width="1032" height="932" viewBox="0 0 1032 932">
          <defs><linearGradient id="fade" x1="0" x2="1"><stop offset=".6" stop-color="#b8202a"/><stop offset="1" stop-color="#b8202a" stop-opacity="0"/></linearGradient></defs>
          <g fill="none" stroke="#b8202a" stroke-width="3" stroke-linejoin="round" stroke-linecap="round">
            <path d="M634 120L633 49H685V119H640"/>
            <path d="M690 97C720 108 752 130 757 163C760 190 735 208 714 219" stroke-width="4"/>
            <path d="M728 199L714 219L738 216" stroke-width="4"/>
            <path d="M181 650L182 578H248V650L196 649" stroke-width="3.500"/>
            <path d="M258 585C270 578 285 572 298 562" stroke-width="3.500"/>
            <path d="M288 560L300 560L296 571" stroke-width="3.500"/>
            <path d="M281 336H985V362H361V390H281Z"/>
            <path d="M281 406H601V434H281Z"/>
            <path d="M281 466V551"/>
            <path d="M506 752V563H623V752H520"/>
            <path d="M506 752V563" stroke-width="4"/>
            <path d="M814 839H894V864H814Z"/>
          </g>
          <rect x="280" y="550" width="218" height="2.500" fill="url(#fade)"/>
        </svg>${digits}`;
    }
}

customElements.define('asc-titlebar', AscTitlebar);
customElements.define('asc-logo', AscLogo);
customElements.define('asc-tabs', AscTabs);
customElements.define('asc-tab', AscTab);
customElements.define('asc-ribbon', AscRibbon);
customElements.define('rb-sep', RbSep);
customElements.define('rb-combo', RbCombo);
customElements.define('rb-item', RbItem);
customElements.define('graph-icon', GraphIcon);
customElements.define('asc-timetable', AscTimetable);
customElements.define('asc-scrollbar', AscScrollbar);
customElements.define('asc-window', AscWindow);
customElements.define('relations-panel', RelationsPanel);
customElements.define('win-combo', WinCombo);
customElements.define('win-button', WinButton);
customElements.define('day-grid', DayGrid);
customElements.define('special-form', SpecialForm);
customElements.define('red-marks', RedMarks);
</script>
</body>
</html>
